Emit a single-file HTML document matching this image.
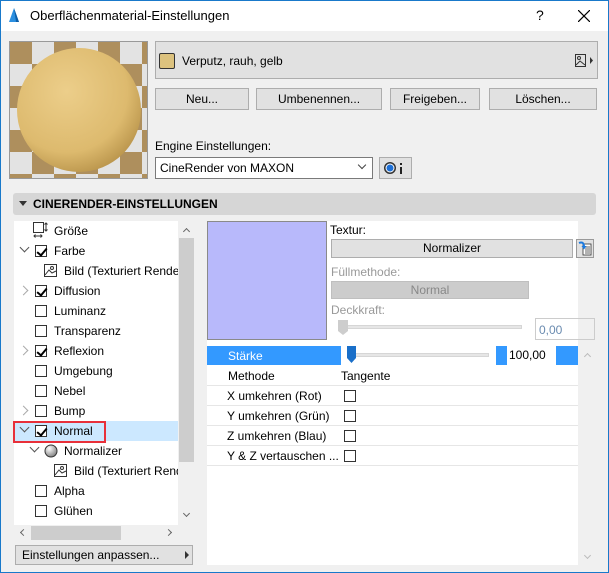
<!DOCTYPE html>
<html><head><meta charset="utf-8"><style>
*{box-sizing:border-box;margin:0;padding:0}
body{width:609px;height:573px;background:#f0f0f0;font-family:"Liberation Sans",sans-serif;font-size:12px;color:#000;position:relative;overflow:hidden}
.a{position:absolute}
.btn{position:absolute;background:#e1e1e1;border:1px solid #adadad;text-align:center;line-height:20px}
.cb{position:absolute;width:12px;height:12px;border:1px solid #333;background:#fff}
.ck::after{content:"";position:absolute;left:3px;top:0px;width:4px;height:8px;border:solid #000;border-width:0 2px 2px 0;transform:rotate(40deg)}
.t{position:absolute;white-space:nowrap}
.chev{position:absolute;width:7px;height:7px;border:solid #555;border-width:0 1.5px 1.5px 0}
.down{transform:rotate(45deg)}
.right{transform:rotate(-45deg);border-color:#aaa}
.line{position:absolute;left:207px;width:371px;height:1px;background:#e6e6e6}
</style></head><body>
<div class="a" style="left:0;top:0;width:1px;height:573px;background:#1979ca"></div>
<div class="a" style="right:0;top:0;width:1px;height:573px;background:#1979ca"></div>
<div class="a" style="left:0;top:0;width:609px;height:1px;background:#1979ca"></div>
<div class="a" style="left:0;bottom:0;width:609px;height:1px;background:#1979ca"></div>
<div class="a" style="left:1px;top:1px;width:607px;height:30px;background:#fff"></div>
<svg class="a" style="left:8px;top:7px" width="12" height="16"><path d="M1 15 L6 1 L11 15 Z" fill="#2b8fe0"/><path d="M6 1 L11 15 L8 15 Z" fill="#0c5ea8"/></svg>
<div class="t" style="left:30px;top:8px;font-size:13px">Oberflächenmaterial-Einstellungen</div>
<div class="t" style="left:536px;top:7px;font-size:14px">?</div>
<svg class="a" style="left:578px;top:10px" width="12" height="12"><path d="M0 0L12 12M12 0L0 12" stroke="#000" stroke-width="1.2"/></svg>

<div class="a" style="left:9px;top:41px;width:139px;height:138px;border:1px solid #999;overflow:hidden;background:#d0d0d0">
<svg width="137" height="136">
<defs><pattern id="ch" width="44" height="44" patternUnits="userSpaceOnUse"><rect width="44" height="44" fill="#dcdcdc"/><rect width="22" height="22" fill="#9a7335"/><rect x="22" y="22" width="22" height="22" fill="#9a7335"/></pattern>
<radialGradient id="sg" cx="0.4" cy="0.35" r="0.7"><stop offset="0" stop-color="#ecce8a"/><stop offset="0.7" stop-color="#ddba6e"/><stop offset="1" stop-color="#b8934a"/></radialGradient></defs>
<rect width="137" height="136" fill="url(#ch)"/>
<rect x="0" y="0" width="137" height="136" fill="#fff" opacity="0.2"/>
<ellipse cx="69" cy="68" rx="62" ry="62" fill="url(#sg)"/>
</svg></div>

<div class="a" style="left:155px;top:41px;width:443px;height:38px;background:#e1e1e1;border:1px solid #adadad"></div>
<div class="a" style="left:159px;top:53px;width:16px;height:16px;background:#dcc27e;border:1px solid #333;border-radius:2px"></div>
<div class="t" style="left:182px;top:54px">Verputz, rauh, gelb</div>
<svg class="a" style="left:575px;top:54px" width="22" height="14"><rect x="0.5" y="0.5" width="10" height="12" fill="none" stroke="#333"/><circle cx="4" cy="4" r="1.5" fill="none" stroke="#333"/><path d="M1 11 L5 7 L10 11" fill="none" stroke="#333"/><path d="M15 3 L18 6.5 L15 10Z" fill="#333"/></svg>

<div class="btn" style="left:155px;top:88px;width:94px;height:22px">Neu...</div>
<div class="btn" style="left:256px;top:88px;width:126px;height:22px">Umbenennen...</div>
<div class="btn" style="left:390px;top:88px;width:90px;height:22px">Freigeben...</div>
<div class="btn" style="left:489px;top:88px;width:108px;height:22px">Löschen...</div>

<div class="t" style="left:155px;top:139px">Engine Einstellungen:</div>
<div class="a" style="left:155px;top:157px;width:218px;height:22px;background:#fff;border:1px solid #7a7a7a"></div>
<div class="t" style="left:160px;top:161px">CineRender von MAXON</div>
<div class="chev down" style="left:359px;top:162px;border-color:#444;width:6px;height:6px;border-width:0 1px 1px 0"></div>
<div class="btn" style="left:379px;top:157px;width:33px;height:22px"></div>
<svg class="a" style="left:383px;top:161px" width="26" height="14"><circle cx="7" cy="7" r="6" fill="#333"/><circle cx="7" cy="7" r="4.5" fill="#fff"/><circle cx="7" cy="7" r="3.5" fill="#1c6fd6"/><rect x="17" y="6" width="2" height="7" fill="#222"/><rect x="17" y="2" width="2" height="2" fill="#222"/></svg>

<div class="a" style="left:13px;top:193px;width:583px;height:22px;background:#d6d6d6;border-radius:3px"></div>
<svg class="a" style="left:19px;top:201px" width="8" height="6"><path d="M0 0H8L4 5Z" fill="#333"/></svg>
<div class="t" style="left:33px;top:197px;font-weight:bold;font-size:12px">CINERENDER-EINSTELLUNGEN</div>

<div class="a" style="left:14px;top:221px;width:165px;height:304px;background:#fff"></div>
<div class="a" style="left:14px;top:421px;width:164px;height:20px;background:#cce8ff"></div>
<div class="a" style="left:13px;top:421px;width:93px;height:22px;border:2px solid #e8303a"></div>

<svg class="a" style="left:33px;top:222px" width="16" height="17"><rect x="0.5" y="0.5" width="10" height="10" fill="none" stroke="#333"/><path d="M13 1V9M11.5 2.5L13 1L14.5 2.5M11.5 7.5L13 9L14.5 7.5M1 14H9M2.5 12.5L1 14L2.5 15.5M7.5 12.5L9 14L7.5 15.5" stroke="#333" fill="none"/></svg>
<div class="t" style="left:54px;top:224px">Größe</div>
<div class="chev down" style="left:21px;top:244px"></div><div class="cb ck" style="left:35px;top:245px"></div><div class="t" style="left:54px;top:244px">Farbe</div>
<svg class="a" style="left:44px;top:264px" width="13" height="13"><rect x="0.5" y="0.5" width="12" height="12" fill="#fff" stroke="#333"/><circle cx="8" cy="4" r="1.5" fill="none" stroke="#333"/><path d="M1 11L5 6L8 9L12 7" fill="none" stroke="#333"/></svg>
<div class="t" style="left:64px;top:264px">Bild (Texturiert Render</div>
<div class="chev right" style="left:20px;top:287px"></div><div class="cb ck" style="left:35px;top:285px"></div><div class="t" style="left:54px;top:284px">Diffusion</div>
<div class="cb" style="left:35px;top:305px"></div><div class="t" style="left:54px;top:304px">Luminanz</div>
<div class="cb" style="left:35px;top:325px"></div><div class="t" style="left:54px;top:324px">Transparenz</div>
<div class="chev right" style="left:20px;top:347px"></div><div class="cb ck" style="left:35px;top:345px"></div><div class="t" style="left:54px;top:344px">Reflexion</div>
<div class="cb" style="left:35px;top:365px"></div><div class="t" style="left:54px;top:364px">Umgebung</div>
<div class="cb" style="left:35px;top:385px"></div><div class="t" style="left:54px;top:384px">Nebel</div>
<div class="chev right" style="left:20px;top:407px"></div><div class="cb" style="left:35px;top:405px"></div><div class="t" style="left:54px;top:404px">Bump</div>
<div class="chev down" style="left:21px;top:424px"></div><div class="cb ck" style="left:35px;top:425px"></div><div class="t" style="left:54px;top:424px">Normal</div>
<div class="chev down" style="left:31px;top:444px"></div>
<svg class="a" style="left:44px;top:444px" width="14" height="14"><defs><radialGradient id="bs" cx="0.35" cy="0.3" r="0.8"><stop offset="0" stop-color="#fff"/><stop offset="1" stop-color="#777"/></radialGradient></defs><circle cx="7" cy="7" r="6" fill="url(#bs)" stroke="#333"/></svg>
<div class="t" style="left:64px;top:444px">Normalizer</div>
<svg class="a" style="left:54px;top:464px" width="13" height="13"><rect x="0.5" y="0.5" width="12" height="12" fill="#fff" stroke="#333"/><circle cx="8" cy="4" r="1.5" fill="none" stroke="#333"/><path d="M1 11L5 6L8 9L12 7" fill="none" stroke="#333"/></svg>
<div class="t" style="left:74px;top:464px">Bild (Texturiert Rend</div>
<div class="cb" style="left:35px;top:485px"></div><div class="t" style="left:54px;top:484px">Alpha</div>
<div class="cb" style="left:35px;top:505px"></div><div class="t" style="left:54px;top:504px">Glühen</div>

<div class="a" style="left:178px;top:221px;width:29px;height:345px;background:#f0f0f0"></div>
<div class="a" style="left:179px;top:238px;width:15px;height:224px;background:#cdcdcd"></div>
<div class="chev" style="left:184px;top:229px;transform:rotate(-135deg);width:5px;height:5px;border-color:#666"></div>
<div class="chev" style="left:184px;top:511px;transform:rotate(45deg);width:5px;height:5px;border-color:#666"></div>
<div class="a" style="left:14px;top:526px;width:165px;height:14px;background:#f0f0f0"></div>
<div class="a" style="left:31px;top:526px;width:90px;height:14px;background:#cdcdcd"></div>
<div class="chev" style="left:21px;top:530px;transform:rotate(135deg);width:5px;height:5px;border-color:#666"></div>
<div class="chev" style="left:166px;top:530px;transform:rotate(-45deg);width:5px;height:5px;border-color:#666"></div>
<div class="btn" style="left:15px;top:545px;width:178px;height:20px;text-align:left;padding-left:6px;line-height:18px">Einstellungen anpassen...</div>
<svg class="a" style="left:185px;top:551px" width="5" height="8"><path d="M0 0L4 4L0 8Z" fill="#333"/></svg>

<div class="a" style="left:207px;top:221px;width:371px;height:344px;background:#fff"></div>
<div class="a" style="left:207px;top:221px;width:120px;height:119px;background:#b8b9fb;border:1px solid #8a8a8a"></div>
<div class="t" style="left:330px;top:223px">Textur:</div>
<div class="btn" style="left:331px;top:239px;width:242px;height:19px;line-height:17px">Normalizer</div>
<svg class="a" style="left:576px;top:239px" width="18" height="19"><rect x="0.5" y="0.5" width="17" height="18" fill="#e1e1e1" stroke="#999"/><rect x="7" y="5" width="8" height="11" fill="#fff" stroke="#333" stroke-width="0.8"/><path d="M9 8H14M9 10H14M9 12H14M9 14H14" stroke="#333" stroke-width="0.8"/><path d="M3 4Q8 2 8 8" fill="none" stroke="#1c7ae0" stroke-width="2"/><path d="M5.5 7L8 10.5L10.5 7Z" fill="#1c7ae0"/></svg>
<div class="t" style="left:331px;top:265px;color:#999">Füllmethode:</div>
<div class="a" style="left:331px;top:281px;width:198px;height:18px;background:#cccccc;border:1px solid #bfbfbf;color:#888;text-align:center;line-height:16px">Normal</div>
<div class="t" style="left:331px;top:303px;color:#999">Deckkraft:</div>
<div class="a" style="left:341px;top:325px;width:181px;height:4px;background:#e6e6e6;border:1px solid #d6d6d6"></div>
<svg class="a" style="left:338px;top:320px" width="10" height="16"><path d="M0 0H10V11L5 15L0 11Z" fill="#cdcdcd"/></svg>
<div class="a" style="left:535px;top:318px;width:60px;height:22px;border:1px solid #ccc;color:#6a8bb0;padding:4px 0 0 3px">0,00</div>

<div class="a" style="left:207px;top:346px;width:134px;height:19px;background:#3399ff"></div>
<div class="t" style="left:228px;top:349px;color:#fff">Stärke</div>
<div class="a" style="left:352px;top:353px;width:137px;height:4px;background:#e6e6e6;border:1px solid #d6d6d6"></div>
<svg class="a" style="left:347px;top:346px" width="10" height="18"><path d="M0 0H9V12L4.5 17L0 12Z" fill="#1a6fc9"/></svg>
<div class="a" style="left:496px;top:346px;width:11px;height:19px;background:#3399ff"></div>
<div class="t" style="left:509px;top:348px">100,00</div>
<div class="a" style="left:556px;top:346px;width:22px;height:19px;background:#3399ff"></div>
<div class="chev" style="left:585px;top:354px;transform:rotate(-135deg);width:5px;height:5px;border-color:#bbb"></div>
<div class="chev" style="left:585px;top:553px;transform:rotate(45deg);width:5px;height:5px;border-color:#bbb"></div>

<div class="t" style="left:228px;top:369px">Methode</div><div class="t" style="left:341px;top:369px">Tangente</div>
<div class="line" style="top:385px"></div>
<div class="t" style="left:227px;top:389px">X umkehren (Rot)</div><div class="cb" style="left:344px;top:390px"></div>
<div class="line" style="top:405px"></div>
<div class="t" style="left:227px;top:409px">Y umkehren (Grün)</div><div class="cb" style="left:344px;top:410px"></div>
<div class="line" style="top:425px"></div>
<div class="t" style="left:227px;top:429px">Z umkehren (Blau)</div><div class="cb" style="left:344px;top:430px"></div>
<div class="line" style="top:445px"></div>
<div class="t" style="left:227px;top:449px">Y &amp; Z vertauschen ...</div><div class="cb" style="left:344px;top:450px"></div>
<div class="line" style="top:465px"></div>
</body></html>
